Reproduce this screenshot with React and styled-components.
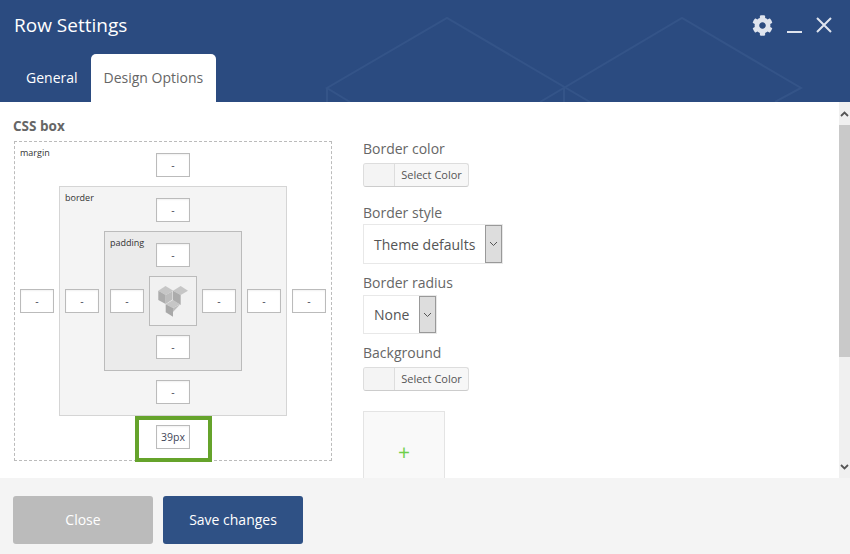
import React from 'react';
import styled, { createGlobalStyle } from 'styled-components';
import { FaCog } from 'react-icons/fa';

const Global = createGlobalStyle`
  html, body { margin: 0; padding: 0; background: #fff; }
  body { font-family: "Open Sans", "Liberation Sans", sans-serif; }
`;

const Modal = styled.div`
  width: 850px;
  height: 554px;
  display: flex;
  flex-direction: column;
  overflow: hidden;
`;

const Header = styled.header`
  position: relative;
  height: 102px;
  flex: none;
  background: #2b4b80;
  display: flex;
  flex-direction: column;
  justify-content: space-between;
  overflow: hidden;
`;

const Pattern = styled.svg`
  position: absolute;
  inset: 0;
  width: 850px;
  height: 102px;
  pointer-events: none;
`;

const TitleRow = styled.div`
  position: relative;
  display: flex;
  align-items: center;
  justify-content: space-between;
  padding: 12px 18px 0 14px;
`;

const Title = styled.h1`
  margin: 0;
  font-size: 19px;
  font-weight: 400;
  line-height: 26px;
  color: #fff;
`;

const Controls = styled.div`
  display: flex;
  align-items: center;
  color: #dfe4ee;
`;

const Minimize = styled.span`
  display: block;
  width: 15px;
  height: 2px;
  background: #dfe4ee;
  margin: 13px 14px 0 14px;
`;

const Tabs = styled.nav`
  position: relative;
  display: flex;
  padding-left: 13px;
`;

const Tab = styled.div`
  height: 48px;
  line-height: 48px;
  padding: 0 13px;
  font-size: 14px;
  border-radius: 5px 5px 0 0;
  color: ${p => (p.$active ? '#666' : '#fff')};
  background: ${p => (p.$active ? '#fff' : 'transparent')};
`;

const Body = styled.div`
  flex: 1;
  min-height: 0;
  display: flex;
  background: #fff;
`;

const Content = styled.main`
  flex: 1;
  min-width: 0;
  overflow: hidden;
  display: flex;
  padding: 16px 0 0 13px;
  gap: 30px;
`;

const LeftCol = styled.section`
  width: 319px;
  flex: none;
  padding-left: 1px;
`;

const Heading = styled.div`
  font-size: 13.5px;
  font-weight: 700;
  line-height: 16px;
  color: #666;
  margin: 0 0 7px -1px;
`;

const CssBox = styled.div`
  position: relative;
  box-sizing: border-box;
  display: grid;
  grid-template-columns: 34px 1fr 34px;
  grid-template-rows: 24px 1fr 24px;
  column-gap: 5px;
  row-gap: 9px;
  justify-items: center;
  align-items: center;
  padding: 11px 5px;
  width: ${p => p.$w}px;
  height: ${p => p.$h}px;
  border: 1px ${p => p.$line} ${p => p.$bc};
  background: ${p => p.$bg};
`;

const BoxCenter = styled.div`
  grid-column: 2;
  grid-row: 2;
  width: 100%;
  height: 100%;
  display: flex;
`;

const BoxLabel = styled.span`
  position: absolute;
  left: 5px;
  top: 4px;
  font-size: 9px;
  line-height: 13px;
  color: #333;
`;

const Field = styled.div`
  position: relative;
  box-sizing: border-box;
  width: 34px;
  height: 24px;
  border: 1px solid #bbb;
  background: #fff;
  box-shadow: inset 0 1px 2px rgba(0, 0, 0, 0.06);
  display: flex;
  align-items: center;
  justify-content: center;
  font-size: 10.5px;
  color: #3f4658;
  grid-column: ${p => p.$col};
  grid-row: ${p => p.$row};
`;

const Highlight = styled.span`
  position: absolute;
  left: -22px;
  right: -23px;
  top: -10px;
  bottom: -14px;
  border: 4px solid #65a32b;
  pointer-events: none;
`;

const Logo = styled.div`
  box-sizing: border-box;
  width: 100%;
  height: 100%;
  border: 1px solid #bbb;
  background: #f1f1f1;
  display: flex;
  align-items: center;
  justify-content: center;
`;

const RightCol = styled.section`
  width: 200px;
  flex: none;
  padding-top: 21px;
`;

const Label = styled.div`
  font-size: 14px;
  line-height: 20px;
  color: #666;
`;

const Group = styled.div`
  margin-top: ${p => p.$mt || 0}px;
  & > ${Label} { margin-bottom: ${p => p.$gap || 0}px; }
`;

const ColorButton = styled.div`
  box-sizing: border-box;
  width: 106px;
  height: 24px;
  display: flex;
  border: 1px solid #ddd;
  border-bottom-color: #ccc;
  border-radius: 3px;
  background: #f7f7f7;
  overflow: hidden;
`;

const Swatch = styled.span`
  width: 30px;
  flex: none;
  border-right: 1px solid #ddd;
  background: #f4f4f4;
`;

const ColorText = styled.span`
  flex: 1;
  text-align: center;
  line-height: 22px;
  font-size: 11px;
  color: #555;
`;

const Select = styled.div`
  box-sizing: border-box;
  display: flex;
  width: ${p => p.$w}px;
  height: ${p => p.$h}px;
  border: 1px solid #e8e8e8;
  background: #fff;
`;

const SelectText = styled.span`
  flex: 1;
  display: flex;
  align-items: center;
  padding-left: 10px;
  font-size: 14px;
  color: #555;
`;

const SelectArrow = styled.span`
  box-sizing: border-box;
  width: 17px;
  border: 1px solid #999;
  background: #ddd;
  display: flex;
  align-items: center;
  justify-content: center;
`;

const ImageAdd = styled.div`
  box-sizing: border-box;
  width: 82px;
  height: 82px;
  margin-top: 20px;
  border: 1px solid #e4e4e4;
  background: #f9f9f9;
  display: flex;
  align-items: center;
  justify-content: center;
  color: #6fd04a;
  font-size: 21px;
  font-weight: 400;
`;

const Scrollbar = styled.div`
  width: 11px;
  flex: none;
  background: #f0f0f0;
  display: flex;
  flex-direction: column;
`;

const ScrollButton = styled.div`
  height: 23px;
  flex: none;
  display: flex;
  align-items: center;
  justify-content: center;
`;

const ScrollThumb = styled.div`
  height: 232px;
  flex: none;
  background: #c9c9c9;
`;

const ScrollRest = styled.div`
  flex: 1;
`;

const Footer = styled.footer`
  height: 76px;
  flex: none;
  box-sizing: border-box;
  background: #f4f4f4;
  display: flex;
  gap: 10px;
  padding: 18px 13px 10px;
`;

const Button = styled.div`
  width: 140px;
  height: 48px;
  line-height: 48px;
  text-align: center;
  border-radius: 3px;
  font-size: 14px;
  color: #fff;
  background: ${p => (p.$primary ? '#2f5185' : '#bbbbbb')};
`;

const Chevron = ({ up }) => (
  <svg width="9" height="6" viewBox="0 0 9 6">
    <path d={up ? 'M1 5 L4.5 1.5 L8 5' : 'M1 1 L4.5 4.5 L8 1'} fill="none" stroke="#555" strokeWidth="1.8" />
  </svg>
);

const SelectChevron = () => (
  <svg width="9" height="6" viewBox="0 0 9 6">
    <path d="M1 1 L4.5 4.5 L8 1" fill="none" stroke="#555" strokeWidth="1" />
  </svg>
);

const CubeLogo = () => (
  <svg width="46" height="48" viewBox="1 1 46 48">
    <path d="M9.3 14.7 L16.5 10 L24.3 14.7 L16.7 19 Z" fill="#c6c6c6" />
    <path d="M9.3 14.7 L16.7 19 L16.7 28 L9.3 24 Z" fill="#acacac" />
    <path d="M16.7 19 L23.5 15.2 L23.5 23.5 L16.7 28 Z" fill="#bdbdbd" />
    <path d="M24 14.7 L31.7 10 L39 14.7 L31.7 19 Z" fill="#c6c6c6" />
    <path d="M24 14.7 L31.7 19 L31.7 29 L24 24.5 Z" fill="#acacac" />
    <path d="M16.7 28.3 L24 24 L31 28.3 L24 32 Z" fill="#c6c6c6" />
    <path d="M16.7 28.3 L24 32 L24 40.7 L16.7 36.3 Z" fill="#a8a8a8" />
    <path d="M24 32 L31 28.5 L24 36 Z" fill="#bdbdbd" />
  </svg>
);

const Sides = ({ bottom }) => (
  <>
    <Field $col={2} $row={1}>-</Field>
    <Field $col={1} $row={2}>-</Field>
    <Field $col={3} $row={2}>-</Field>
    <Field $col={2} $row={3}>{bottom || '-'}</Field>
  </>
);

export default function App() {
  return (
    <Modal>
      <Global />
      <Header>
        <Pattern viewBox="0 0 850 102">
          <g fill="none" stroke="#345488" strokeWidth="2">
            <path d="M350 102 L327 88 L447 18 L590 102" />
            <path d="M327 88 V102" />
            <path d="M540 102 L682 18 L801 88 L775 102" />
            <path d="M564 88 V102" />
          </g>
        </Pattern>
        <TitleRow>
          <Title>Row Settings</Title>
          <Controls>
            <FaCog size={21} />
            <Minimize />
            <svg width="16" height="16" viewBox="0 0 16 16">
              <path d="M1 1 L15 15 M15 1 L1 15" stroke="#dfe4ee" strokeWidth="2" fill="none" />
            </svg>
          </Controls>
        </TitleRow>
        <Tabs>
          <Tab>General</Tab>
          <Tab $active>Design Options</Tab>
        </Tabs>
      </Header>
      <Body>
        <Content>
          <LeftCol>
            <Heading>CSS box</Heading>
            <CssBox $w={318} $h={320} $line="dashed" $bc="#bbb" $bg="#fff">
              <BoxLabel>margin</BoxLabel>
              <Sides bottom={<>39px<Highlight /></>} />
              <BoxCenter>
                <CssBox $w={228} $h={230} $line="solid" $bc="#d5d5d5" $bg="#f4f4f4">
                  <BoxLabel>border</BoxLabel>
                  <Sides />
                  <BoxCenter>
                    <CssBox $w={138} $h={140} $line="solid" $bc="#bbb" $bg="#ebebeb">
                      <BoxLabel>padding</BoxLabel>
                      <Sides />
                      <BoxCenter>
                        <Logo><CubeLogo /></Logo>
                      </BoxCenter>
                    </CssBox>
                  </BoxCenter>
                </CssBox>
              </BoxCenter>
            </CssBox>
          </LeftCol>
          <RightCol>
            <Group $gap={4}>
              <Label>Border color</Label>
              <ColorButton><Swatch /><ColorText>Select Color</ColorText></ColorButton>
            </Group>
            <Group $mt={16} $gap={1}>
              <Label>Border style</Label>
              <Select $w={140} $h={40}><SelectText>Theme defaults</SelectText><SelectArrow><SelectChevron /></SelectArrow></Select>
            </Group>
            <Group $mt={9} $gap={2}>
              <Label>Border radius</Label>
              <Select $w={74} $h={39}><SelectText>None</SelectText><SelectArrow><SelectChevron /></SelectArrow></Select>
            </Group>
            <Group $mt={9} $gap={4}>
              <Label>Background</Label>
              <ColorButton><Swatch /><ColorText>Select Color</ColorText></ColorButton>
            </Group>
            <ImageAdd>+</ImageAdd>
          </RightCol>
        </Content>
        <Scrollbar>
          <ScrollButton><Chevron up /></ScrollButton>
          <ScrollThumb />
          <ScrollRest />
          <ScrollButton><Chevron /></ScrollButton>
        </Scrollbar>
      </Body>
      <Footer>
        <Button>Close</Button>
        <Button $primary>Save changes</Button>
      </Footer>
    </Modal>
  );
}
